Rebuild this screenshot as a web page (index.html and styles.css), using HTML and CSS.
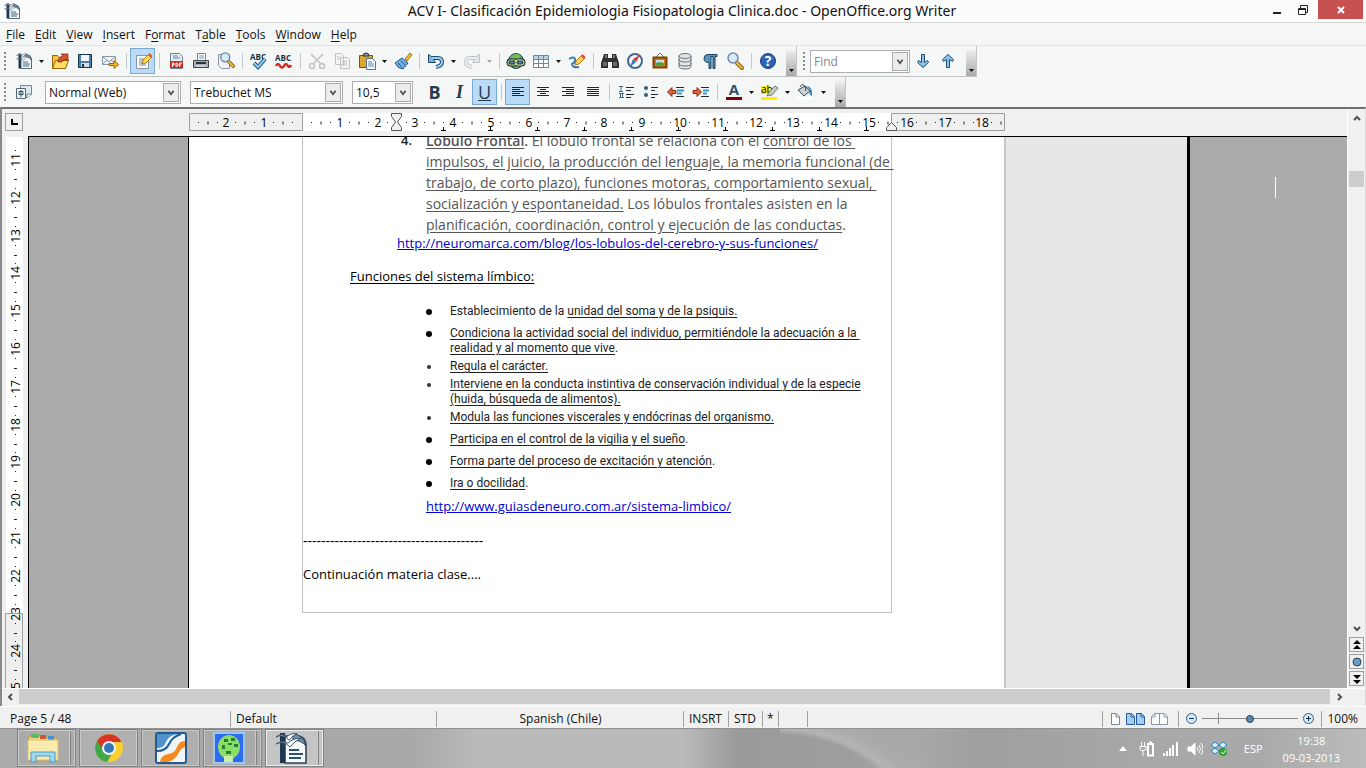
FILE: index.html
```html
<!DOCTYPE html>
<html lang="es">
  <head>
    <title>ACV I- Clasificación Epidemiologia Fisiopatologia Clinica.doc - OpenOffice.org Writer</title>
    <meta charset="UTF-8">
    <link rel="stylesheet" href="styles.css">
  </head>
  <body>
    <svg class="defs" width="0" height="0">
        <symbol id="writer" viewBox="0 0 16 16">
            <path d="M5 2h6q4 0 4.500 4v9.500H5z" fill="#f4f8fb" stroke="#2d4658" stroke-width=".8"/>
            <path d="M9 1q5 0 6.500 6Q13 4 9 4z" fill="#6f8ea3" stroke="#2d4658" stroke-width=".5"/>
            <path d="M2.500.5H5v15H2.500z" fill="#1d3850"/>
            <path d="M.5 2.500q3-1.500 5 .3Q7.500.5 11 .8 8.500 2 7 4.200 4-.5.5 2.500z" fill="#fff" stroke="#40596b" stroke-width=".5"/>
            <path d="M.5 6q3-2 6-.4Q9 3 13 3.200 9.500 4.500 7.500 7.500 4.500 4 .5 6z" fill="#fff" stroke="#40596b" stroke-width=".5"/>
            <path d="M7 9h5M7 11h7M7 13h6" stroke="#2f526c" stroke-width=".9"/>
        </symbol>
        <symbol id="down" viewBox="0 0 5 3"><path d="M0 0h5L2.500 3z" fill="currentColor"/></symbol>
        <symbol id="chevron" viewBox="0 0 8 8"><path d="M1 2l3 4 3-4" fill="none" stroke="#505050" stroke-width="2"/></symbol>
        <symbol id="lens" viewBox="0 0 20 20">
            <path d="M12 12l5 5" stroke="#8b6310" stroke-width="4" stroke-linecap="round"/>
            <path d="M12 12l5 5" stroke="#f0bf3c" stroke-width="2" stroke-linecap="round"/>
            <circle cx="8" cy="7" r="5" fill="#d5eafa" stroke="#7189a0" stroke-width="1.500"/>
        </symbol>
    </svg>

    <header class="titlebar">
        <svg class="app-icon" width="16" height="16"><use href="#writer"/></svg>
        <h1>ACV I- Clasificación Epidemiologia Fisiopatologia Clinica.doc - OpenOffice.org Writer</h1>
        <div class="window-buttons">
            <button aria-label="Minimize"><svg width="8" height="10"><path d="M0 7h8v2H0z" fill="#222"/></svg></button>
            <button aria-label="Restore"><svg width="10" height="10" fill="none" stroke="#222"><path d="M.5 3.500h7v6h-7zM.5 4.500h7M2.500 3V.5h7v7H8"/></svg></button>
            <button class="close" aria-label="Close"><svg width="8" height="8"><path d="M1 1l6 6M7 1L1 7" stroke="#fff" stroke-width="2"/></svg></button>
        </div>
    </header>

    <nav class="menubar">
        <button><u>F</u>ile</button>
        <button><u>E</u>dit</button>
        <button><u>V</u>iew</button>
        <button><u>I</u>nsert</button>
        <button>F<u>o</u>rmat</button>
        <button>T<u>a</u>ble</button>
        <button><u>T</u>ools</button>
        <button><u>W</u>indow</button>
        <button><u>H</u>elp</button>
    </nav>

    <div class="toolbar-row">
        <div class="toolbar">
            <span class="grip"></span>
            <button class="tool" aria-label="New"><svg width="16" height="16"><use href="#writer"/></svg></button>
            <button class="drop" aria-label="New options"><svg width="5" height="3"><use href="#down"/></svg></button>
            <button class="tool" aria-label="Open"><svg viewBox="0 0 20 20"><path d="M2.500 17.500v-13h5l2 2h6v11z" fill="#f7c33c" stroke="#9b6408"/><path d="M2.500 17.500l3-8h13l-3 8z" fill="#ffdc62" stroke="#9b6408"/><path d="M8 11q0-5 5-6l-2-2h7v7l-2-2q-4 1-4 3z" fill="#d8502c" stroke="#7a2210" stroke-width=".7"/></svg></button>
            <button class="tool" aria-label="Save"><svg viewBox="0 0 20 20"><path d="M3.500 3.500h13v13h-13z" fill="#4c80a8" stroke="#17344d"/><path d="M6 4h8v6H6z" fill="#f2f6fa"/><path d="M6 12h8v4H6z" fill="#d3dde6"/><path d="M7 13h2v3H7z" fill="#17344d"/></svg></button>
            <button class="tool" aria-label="E-mail"><svg viewBox="0 0 20 20"><path d="M2.500 5.500h13v8h-13z" fill="#eef3f7" stroke="#8797a5"/><path d="M3 6l6 5 6-5M3 13l4-4M15 13l-4-4" fill="none" stroke="#8797a5"/><path d="M9 12.500h5v-3l4.500 4-4.500 4v-3H9z" fill="#f5b731" stroke="#9b6408"/></svg></button>
            <span class="sep"></span>
            <button class="tool pressed" aria-label="Edit File"><svg viewBox="0 0 20 20"><path d="M3.500 4.500h12v13h-12z" fill="#f6f9fb" stroke="#8797a5"/><path d="M6 8h6M6 10h4M6 12h4M6 14h7" stroke="#7b8d9c"/><path d="M9 13l1-4 6-6 3 3-6 6z" fill="#ffd84a" stroke="#9b6408" stroke-width=".8"/><path d="M15 4l3 3 1.500-2-3-3z" fill="#e0553a"/></svg></button>
            <span class="sep"></span>
            <button class="tool" aria-label="Export as PDF"><svg viewBox="0 0 20 20"><path d="M4.500 2.500h9l3 3v12h-12z" fill="#e4edf4" stroke="#6d8294"/><path d="M7 5h5M7 7h7" stroke="#6d8294"/><path d="M4 10h13v7H4z" fill="#d12c20"/><path d="M6.500 16v-4h1.500v2H6.500M10 12v3.500q2 0 2-1.700T10 12M13.500 16v-4H16M13.500 14H15" fill="none" stroke="#fff"/></svg></button>
            <button class="tool" aria-label="Print"><svg viewBox="0 0 20 20"><path d="M6.500 9V2.500h8V9" fill="#fff" stroke="#6d8294"/><path d="M8 5h5M8 7h5" stroke="#5b9bd0"/><path d="M2.500 9.500h15v7h-15z" fill="#a8b0b6" stroke="#3e474e"/><path d="M5 12h10" stroke="#2c3439" stroke-width="2"/><path d="M5 15h10" stroke="#eee"/></svg></button>
            <button class="tool" aria-label="Page Preview"><svg viewBox="0 0 20 20"><path d="M2.500 3.500h11v14h-8l-3-3z" fill="#f0f5f9" stroke="#8797a5"/><use href="#lens" x="2" y="0" width="18" height="18"/></svg></button>
            <span class="sep"></span>
            <button class="tool" aria-label="Spelling and Grammar"><svg viewBox="0 0 20 20"><text x="1" y="9" class="abc">ABC</text><path d="M5 12l4 4 7-8" fill="none" stroke="#1d5580" stroke-width="4"/><path d="M5 12l4 4 7-8" fill="none" stroke="#8dcaf0" stroke-width="2"/></svg></button>
            <button class="tool" aria-label="AutoSpellcheck"><svg viewBox="0 0 20 20"><text x="1" y="10" class="abc">ABC</text><path d="M2 15q2-4 4 0 2 3 4 0 2-4 4 0 2 2 3-1" fill="none" stroke="#d52b1e" stroke-width="2.500"/></svg></button>
            <span class="sep"></span>
            <button class="tool" aria-label="Cut"><svg viewBox="0 0 20 20" fill="none" stroke="#bfc3c6" stroke-width="1.500"><path d="M4 3l10 10M16 3L6 13"/><circle cx="5" cy="15" r="2.500"/><circle cx="15" cy="15" r="2.500"/></svg></button>
            <button class="tool" aria-label="Copy"><svg viewBox="0 0 20 20" fill="#f3f4f4" stroke="#bfc3c6"><path d="M3.500 2.500h6l2 2v9h-8zM8.500 6.500h7l2 2v9h-9z"/><path d="M5 6h3M5 8h3M10 10h5M10 12h5M10 14h5"/></svg></button>
            <button class="tool" aria-label="Paste"><svg viewBox="0 0 20 20"><path d="M2.500 4.500h13v12h-13z" fill="#dba52f" stroke="#7d5507"/><path d="M6 5q0-3 3-3t3 3z" fill="#8c959c" stroke="#333"/><path d="M9.500 7.500h6l3 3v8h-9z" fill="#f3f7fa" stroke="#5a7083"/><path d="M11 11h4M11 13h6M11 15h6" stroke="#5b8bb5"/></svg></button>
            <button class="drop" aria-label="Paste options"><svg width="5" height="3"><use href="#down"/></svg></button>
            <button class="tool" aria-label="Format Paintbrush"><svg viewBox="0 0 20 20"><path d="M12 8l5-6 2 2-5 6z" fill="#f0b52e" stroke="#8b6310" stroke-width=".8"/><path d="M2 12l7-5 6 5-5 6q-5 0-8-6z" fill="#6eaee0" stroke="#1c5a90"/><path d="M5 12l4 4M8 10l4 4" stroke="#1c5a90"/></svg></button>
            <span class="sep"></span>
            <button class="tool" aria-label="Undo"><svg viewBox="0 0 20 20"><path d="M5 7h7q4 0 4 4t-6 5" fill="none" stroke="#1d4c70" stroke-width="4"/><path d="M2.500 3.500v8h7l-2-3V6l-2-.5z" fill="#7db4dc" stroke="#1d4c70"/><path d="M6 7h6q4 0 4 4t-6 5" fill="none" stroke="#9bcbed" stroke-width="2"/></svg></button>
            <button class="drop" aria-label="Undo list"><svg width="5" height="3"><use href="#down"/></svg></button>
            <button class="tool" aria-label="Redo" disabled><svg viewBox="0 0 20 20"><path d="M15 7H8q-4 0-4 4t6 5" fill="none" stroke="#c0c4c7" stroke-width="4"/><path d="M17.500 3.500v8h-7l2-3V6l2-.5z" fill="#e2e5e7" stroke="#c0c4c7"/><path d="M14 7H8q-4 0-4 4t6 5" fill="none" stroke="#eceeef" stroke-width="2"/></svg></button>
            <button class="drop" aria-label="Redo list" disabled><svg width="5" height="3"><use href="#down"/></svg></button>
            <span class="sep"></span>
            <button class="tool" aria-label="Hyperlink"><svg viewBox="0 0 20 20"><circle cx="10" cy="10" r="7.500" fill="#4c8bbd" stroke="#26475f"/><path d="M4 6q4-4 9-3l2 3-4 2-6-1zM6 15l5-1 3 1-3 2z" fill="#75bd4b"/><rect x="2" y="9" width="9" height="5" rx="2.500" fill="none" stroke="#233524" stroke-width="3"/><rect x="9" y="9" width="9" height="5" rx="2.500" fill="none" stroke="#233524" stroke-width="3"/><rect x="2" y="9" width="9" height="5" rx="2.500" fill="none" stroke="#c9e67a"/><rect x="9" y="9" width="9" height="5" rx="2.500" fill="none" stroke="#f3f6d8"/></svg></button>
            <button class="tool" aria-label="Table"><svg viewBox="0 0 20 20"><path d="M2.500 4.500h15v12h-15z" fill="#fff" stroke="#71879a"/><path d="M3 5h14v3H3z" fill="#b8d2e8"/><path d="M2 8.500h16M2 12.500h16M7.500 5v12M12.500 5v12" stroke="#71879a"/></svg></button>
            <button class="drop" aria-label="Table size"><svg width="5" height="3"><use href="#down"/></svg></button>
            <button class="tool" aria-label="Show Draw Functions"><svg viewBox="0 0 20 20"><path d="M2 8q5-3 6 0t-3 5q0 4 7 3" fill="none" stroke="#3a78b8" stroke-width="2"/><path d="M8 14l1-4 6-6 3 3-6 6z" fill="#ffd04a" stroke="#9b6408" stroke-width=".8"/><path d="M14 5l3 3 1.500-2-3-3z" fill="#d84a38"/></svg></button>
            <span class="sep"></span>
            <button class="tool" aria-label="Find and Replace"><svg viewBox="0 0 20 20"><path d="M4 3h4v4h4V3h4l3 9v5h-7v-6H8v6H1v-5z" fill="#2f3032"/><path d="M3 11h4v4H3zM13 11h4v4h-4z" fill="#666b70"/><path d="M5 4h2v3H5zM13 4h2v3h-2z" fill="#777"/></svg></button>
            <button class="tool" aria-label="Navigator"><svg viewBox="0 0 20 20"><circle cx="10" cy="10" r="7" fill="#f5f9fc" stroke="#46698a" stroke-width="2"/><path d="M15 4l-7 4 3 3z" fill="#df3524"/><path d="M5 16l3-8 3 3z" fill="#2e78c4"/></svg></button>
            <button class="tool" aria-label="Gallery"><svg viewBox="0 0 20 20"><path d="M6 6l4-4 4 4" fill="none" stroke="#777"/><path d="M3.500 6.500h13v10h-13z" fill="#c87c20" stroke="#7c430b" stroke-width="2"/><path d="M6 9h8v5H6z" fill="#bfe0f8"/><path d="M6 14v-2l3-1 5 1v2z" fill="#4e9b38"/><circle cx="12" cy="10" r="1" fill="#ffdd3c"/></svg></button>
            <button class="tool" aria-label="Data Sources"><svg viewBox="0 0 20 20" fill="#e0e5e8" stroke="#697278"><path d="M4 5v10q0 3 6 3t6-3V5"/><ellipse cx="10" cy="5" rx="6" ry="2.500"/><path d="M4 8q0 3 6 3t6-3M4 12q0 3 6 3t6-3" fill="none"/></svg></button>
            <button class="tool" aria-label="Nonprinting Characters"><svg viewBox="0 0 20 20"><path d="M17 3.500H8q-4 0-4 4t5 4v6h2v-12h2v12h2v-12h2z" fill="#5b93bb" stroke="#17405f"/></svg></button>
            <button class="tool" aria-label="Zoom"><svg viewBox="0 0 20 20"><use href="#lens" width="20" height="20"/></svg></button>
            <span class="sep"></span>
            <button class="tool" aria-label="Help"><svg viewBox="0 0 20 20"><circle cx="10" cy="10" r="7.500" fill="#2d62b4" stroke="#173b78"/><text x="10" y="15" class="help-mark">?</text></svg></button>
            <button class="more" aria-label="Toolbar options"><svg width="5" height="3"><use href="#down"/></svg></button>
        </div>
        <div class="toolbar find-bar">
            <span class="grip"></span>
            <div class="combo find">
                <input type="text" placeholder="Find" aria-label="Find">
                <svg class="combo-arrow" viewBox="0 0 16 18"><use href="#chevron" x="4" y="5" width="8" height="8"/></svg>
            </div>
            <button class="tool" aria-label="Find Next"><svg viewBox="0 0 20 20"><path d="M8.500 3.500h3v8l3-2 1 2-5.500 5-5.500-5 1-2 3 2z" fill="#8cc3ea" stroke="#1d4c70"/></svg></button>
            <button class="tool" aria-label="Find Previous"><svg viewBox="0 0 20 20"><path d="M8.500 16.500h3v-8l3 2 1-2-5.500-5-5.500 5 1 2 3-2z" fill="#8cc3ea" stroke="#1d4c70"/></svg></button>
            <button class="more" aria-label="Find toolbar options"><svg width="5" height="3"><use href="#down"/></svg></button>
        </div>
    </div>

    <div class="toolbar-row format-row">
        <div class="toolbar">
            <span class="grip"></span>
            <button class="tool" aria-label="Styles and Formatting"><svg viewBox="0 0 20 20"><path d="M6.500 3.500h11v9l-4 3h-7z" fill="#dfe8ef" stroke="#71879a"/><path d="M17 12h-4v4" fill="#fff" stroke="#71879a"/><path d="M2.500 6.500h9v10h-9z" fill="#f2f6f9" stroke="#52697d"/><path d="M5 9.500h4v3H5zM7 8v7" fill="none" stroke="#334c61"/></svg></button>
            <div class="combo style">
                <select aria-label="Apply Style"><option>Normal (Web)</option></select>
                <svg class="combo-arrow" viewBox="0 0 16 18"><use href="#chevron" x="4" y="5" width="8" height="8"/></svg>
            </div>
            <div class="combo font">
                <select aria-label="Font Name"><option>Trebuchet MS</option></select>
                <svg class="combo-arrow" viewBox="0 0 16 18"><use href="#chevron" x="4" y="5" width="8" height="8"/></svg>
            </div>
            <div class="combo size">
                <select aria-label="Font Size"><option>10,5</option></select>
                <svg class="combo-arrow" viewBox="0 0 16 18"><use href="#chevron" x="4" y="5" width="8" height="8"/></svg>
            </div>
            <button class="tool letter bold">B</button>
            <button class="tool letter italic">I</button>
            <button class="tool letter underline pressed">U</button>
            <span class="sep"></span>
            <button class="tool pressed" aria-label="Align Left"><svg viewBox="0 0 20 20" stroke="#1f2933"><path d="M4 5.500h12M4 7.500h8M4 9.500h12M4 11.500h8M4 13.500h12"/></svg></button>
            <button class="tool" aria-label="Centered"><svg viewBox="0 0 20 20" stroke="#1f2933"><path d="M4 5.500h12M7 7.500h6M4 9.500h12M7 11.500h6M4 13.500h12"/></svg></button>
            <button class="tool" aria-label="Align Right"><svg viewBox="0 0 20 20" stroke="#1f2933"><path d="M4 5.500h12M8 7.500h8M4 9.500h12M8 11.500h8M4 13.500h12"/></svg></button>
            <button class="tool" aria-label="Justified"><svg viewBox="0 0 20 20" stroke="#1f2933"><path d="M4 5.500h12M4 7.500h12M4 9.500h12M4 11.500h12M4 13.500h12"/></svg></button>
            <span class="sep"></span>
            <button class="tool" aria-label="Numbering On/Off"><svg viewBox="0 0 20 20"><path d="M10 5.500h8M10 8.500h5M10 12.500h8M10 15.500h5" stroke="#1f2933"/><path d="M3 4.500h4M5 4v5M3 9.500h4M3 11.500h5M4.500 11v5M6.500 11v5M3 15.500h5" stroke="#3f6b8c"/></svg></button>
            <button class="tool" aria-label="Bullets On/Off"><svg viewBox="0 0 20 20"><path d="M10 5.500h7M10 8.500h4M10 12.500h7M10 15.500h4" stroke="#1f2933"/><circle cx="5" cy="6" r="2" fill="#31607f"/><circle cx="5" cy="13" r="2" fill="#31607f"/></svg></button>
            <button class="tool" aria-label="Decrease Indent"><svg viewBox="0 0 20 20"><path d="M10 5.500h8M10 14.500h8" stroke="#1f2933"/><path d="M11 8.500h7M11 11.500h5" stroke="#3c9ad0" stroke-width="2"/><path d="M10 8.500H6v-3L1.500 10 6 14.500v-3h4z" fill="#e0663c" stroke="#8c2813"/></svg></button>
            <button class="tool" aria-label="Increase Indent"><svg viewBox="0 0 20 20"><path d="M10 5.500h8M10 14.500h8" stroke="#1f2933"/><path d="M12 8.500h6M12 11.500h4" stroke="#3c9ad0" stroke-width="2"/><path d="M2 8.500h4v-3l4.500 4.500L6 14.500v-3H2z" fill="#e0663c" stroke="#8c2813"/></svg></button>
            <span class="sep"></span>
            <button class="tool" aria-label="Font Color"><svg viewBox="0 0 20 20"><text x="10" y="13" class="color-letter">A</text><path d="M2 15h16v3H2z" fill="#800000"/></svg></button>
            <button class="drop" aria-label="Font colors"><svg width="5" height="3"><use href="#down"/></svg></button>
            <button class="tool" aria-label="Highlighting"><svg viewBox="0 0 20 20"><path d="M1 4h9v8H1zM1 15h16v3H1z" fill="#ffee00"/><text x="1" y="11" class="ab">ab</text><path d="M7 14l2-4 6-6 3 2-6 7z" fill="#c3c9c4" stroke="#596153" stroke-width=".8"/></svg></button>
            <button class="drop" aria-label="Highlight colors"><svg width="5" height="3"><use href="#down"/></svg></button>
            <button class="tool" aria-label="Background Color"><svg viewBox="0 0 20 20"><path d="M1 15h16v3H1z" fill="#fff"/><path d="M2 8l7-4 5 5-6 5z" fill="#c8d1d7" stroke="#3f4a52"/><path d="M4 5q2-4 5-1l1 5" fill="none" stroke="#3f4a52"/><path d="M10 4q7 0 6 10-4-2-2-6z" fill="#3f86bd"/></svg></button>
            <button class="drop" aria-label="Background colors"><svg width="5" height="3"><use href="#down"/></svg></button>
            <button class="more" aria-label="Formatting options"><svg width="5" height="3"><use href="#down"/></svg></button>
        </div>
    </div>

    <main class="editor">
        <div class="ruler-bar">
            <button class="tab-type" aria-label="Tab type"><svg width="7" height="6"><path d="M1 0v5h6" fill="none" stroke="#000" stroke-width="2"/></svg></button>
            <svg class="ruler-h" width="824" height="20">
                <path d="M114 0h588v18H114z" fill="#fff"/>
                <path d="M.5.5h113v17H.5zM702.500.5h113v17h-113z" fill="#efefef" stroke="#9f9f9f"/>
            </svg>
        </div>
        <svg class="ruler-v" width="26">
            <path d="M4 1h17v476H4z" fill="#fff"/>
            <path d="M3.500 477.500h17v900h-17z" fill="#efefef" stroke="#9f9f9f"/>
        </svg>
        <div class="workspace">
            <article class="page">
                <div class="text-area">
                    <div class="numbered">
                        <span class="number">4.</span>
                        <p><u><b>Lóbulo Frontal</b></u><b>.</b> El lóbulo frontal se relaciona con el <u>control de los </u><br><u>impulsos, el juicio, la producción del lenguaje, la memoria funcional (de </u><br><u>trabajo, de corto plazo), funciones motoras, comportamiento sexual, </u><br><u>socialización y espontaneidad.</u> Los lóbulos frontales asisten en la<br><u>planificación, coordinación, control y ejecución de las conductas</u>.</p>
                    </div>
                    <p class="source"><a href="#">http://neuromarca.com/blog/los-lobulos-del-cerebro-y-sus-funciones/</a></p>
                    <h2>Funciones del sistema límbico:</h2>
                    <ul>
                        <li><p>Establecimiento de la <u>unidad del soma y de la psiquis.</u></p></li>
                        <li><p><u>Condiciona la actividad social del individuo, permitiéndole la adecuación a la </u><br><u>realidad y al momento que vive</u>.</p></li>
                        <li class="tight"><p><u>Regula el carácter.</u></p></li>
                        <li class="tight"><p><u>Interviene en la conducta instintiva de conservación individual y de la especie</u><br><u>(huida, búsqueda de alimentos).</u></p></li>
                        <li class="tight"><p><u>Modula las funciones viscerales y endócrinas del organismo.</u></p></li>
                        <li><p><u>Participa en el control de la vigilia y el sueño</u>.</p></li>
                        <li><p><u>Forma parte del proceso de excitación y atención</u>.</p></li>
                        <li><p><u>Ira o docilidad</u>.</p></li>
                    </ul>
                    <p class="source inner"><a href="#">http://www.guiasdeneuro.com.ar/sistema-limbico/</a></p>
                    <p class="plain dashes">----------------------------------------</p>
                    <p class="plain">Continuación materia clase....</p>
                </div>
            </article>
            <aside class="notes"></aside>
            <span class="caret"></span>
        </div>
        <div class="scroll-v">
            <button aria-label="Scroll up"><svg width="8" height="8"><path d="M1 6l3-3 3 3" fill="none" stroke="#505050" stroke-width="2"/></svg></button>
            <div class="track"><span class="thumb"></span></div>
            <button aria-label="Scroll down"><svg width="8" height="8"><path d="M1 2l3 3 3-3" fill="none" stroke="#505050" stroke-width="2"/></svg></button>
            <button class="jump" aria-label="Previous Page"><svg width="8" height="10"><path d="M4 0l4 4H0zM4 5l4 4H0z"/></svg></button>
            <button class="jump" aria-label="Navigation"><svg width="10" height="10"><circle cx="5" cy="5" r="4" fill="#6a9cc4" stroke="#27465f"/></svg></button>
            <button class="jump" aria-label="Next Page"><svg width="8" height="10"><path d="M0 1h8L4 5zM0 6h8l-4 4z"/></svg></button>
        </div>
        <div class="scroll-h">
            <button aria-label="Scroll left"><svg width="8" height="8"><path d="M5 1L2 4l3 3" fill="none" stroke="#505050" stroke-width="2"/></svg></button>
            <span class="thumb"></span>
            <button aria-label="Scroll right"><svg width="8" height="8"><path d="M3 1l3 3-3 3" fill="none" stroke="#505050" stroke-width="2"/></svg></button>
        </div>
    </main>

    <footer class="statusbar">
        <span class="page-no">Page 5 / 48</span>
        <span class="page-style">Default</span>
        <span class="language">Spanish (Chile)</span>
        <span class="insert-mode">INSRT</span>
        <span class="select-mode">STD</span>
        <span class="modified">*</span>
        <span class="signature"></span>
        <span class="info"></span>
        <span class="views">
            <button aria-label="Single page"><svg width="9" height="12"><path d="M.5.5h5l3 3v8h-8z" fill="#fff" stroke="#71879a"/><path d="M5 1v3h3" fill="none" stroke="#71879a"/></svg></button>
            <button aria-label="Several pages"><svg width="19" height="12"><path d="M.5.500h5l3 3v8h-8zM10.500.5h5l3 3v8h-8z" fill="#a9cdf0" stroke="#245a9c"/><path d="M5 1v3h3M15 1v3h3" fill="none" stroke="#245a9c"/></svg></button>
            <button aria-label="Book mode"><svg width="17" height="12"><path d="M.5 3.500l3-3h5v11h-8zM8.500.5h5l3 3v8h-8z" fill="#fff" stroke="#8797a5"/><path d="M4 1v3H1M13 1v3h3" fill="none" stroke="#8797a5"/></svg></button>
        </span>
        <span class="zoom">
            <button aria-label="Zoom out"><svg width="11" height="11"><circle cx="5.500" cy="5.500" r="5" fill="#d4e9f8" stroke="#31607f"/><path d="M3 5.500h5" stroke="#17344d"/></svg></button>
            <input type="range" min="0" max="100" value="49" aria-label="Zoom">
            <button aria-label="Zoom in"><svg width="11" height="11"><circle cx="5.500" cy="5.500" r="5" fill="#d4e9f8" stroke="#31607f"/><path d="M3 5.500h5M5.500 3v5" stroke="#17344d"/></svg></button>
        </span>
        <span class="percent">100%</span>
    </footer>

    <div class="taskbar">
        <div class="apps">
            <button class="stack" aria-label="File Explorer"><svg width="34" height="34" viewBox="0 0 34 34"><path d="M3 5h11l2 2h15v22H3z" fill="#f4dc84" stroke="#b99a42"/><path d="M5 3h8v4H5z" fill="#5fb86a"/><path d="M14 4h6v4h-6z" fill="#d4552f"/><path d="M22 5h6v4h-6z" fill="#3f8fd0"/><path d="M2 9h30v20H2z" fill="#f9ebae" stroke="#d9c06c"/><path d="M5 31V21h24v10h-5v-6H10v6z" fill="#9fd8f0" stroke="#4b9cc4"/></svg></button>
            <button aria-label="Chrome"><svg width="32" height="32" viewBox="0 0 32 32"><circle cx="16" cy="16" r="14" fill="#f7cf2e"/><path d="M4 9a14 14 0 0 0 10 21l7-12-11-6z" fill="#42a648"/><path d="M4 9A14 14 0 0 1 28.500 10H16l-6 7z" fill="#d8352a"/><circle cx="16" cy="16" r="7" fill="#f3f3f3"/><circle cx="16" cy="16" r="5" fill="#3476bd"/></svg></button>
            <button aria-label="Foxit Reader"><svg width="32" height="32" viewBox="0 0 32 32"><rect x="1" y="1" width="30" height="30" rx="2" fill="#f2f5f8" stroke="#215b91" stroke-width="2"/><path d="M2 16q7 0 9-6t11-8H2z" fill="#4f94cc"/><path d="M2 19q9 0 12-7T26 2" fill="none" stroke="#1d5f9e" stroke-width="2"/><path d="M5 30q1-7 8-8t9-7 8-6v6q-4 1-7 7t-10 8z" fill="#f58a1c"/></svg></button>
            <button class="stack" aria-label="Image viewer"><svg width="32" height="32" viewBox="0 0 32 32"><path d="M1 1h30v30H1z" fill="#2f6bf0" stroke="#9cc8f2" stroke-width="2"/><ellipse cx="16" cy="15" rx="11" ry="12" fill="#8ddc6a"/><path d="M11 24h9v6h-9z" fill="#c6f0a8"/><path d="M11 7h4v3h-4zM18 6h4v3h-4zM9 13h3v4H9zM21 12h4v3h-4zM13 19h5v3h-5zM15 11h4v2h-4z" fill="#247f2c"/></svg></button>
            <button class="stack active" aria-label="OpenOffice Writer"><svg width="32" height="32"><use href="#writer"/></svg></button>
        </div>
        <div class="tray">
            <svg class="show-hidden" width="8" height="5"><path d="M4 0l4 5H0z" fill="#fff"/></svg>
            <svg width="16" height="16" fill="none" stroke="#fff"><path d="M9 3h5v11.500H9zM10 1.500h3" stroke-width="2"/><path d="M2.500 1v4M5.500 1v4M1 5.500h6v3l-2 1H3l-2-1zM4 10v5"/></svg>
            <svg width="16" height="14" fill="#fff"><path d="M0 11h2v3H0zM3 9h2v5H3zM6 6h2v8H6zM9 3h2v11H9zM13 0h2v14h-2z"/></svg>
            <svg width="16" height="14" fill="none" stroke="#fff"><path d="M1 5h3l4-4v12L4 9H1z" fill="#fff"/><path d="M10 5q2 2 0 4M12 3q3 4 0 8M14 1q4 6 0 12"/></svg>
            <svg width="17" height="16"><path d="M4 1l4 3-4 3-4-3zM12 1l4 3-4 3-4-3zM4 7l4 3-4 3-4-3zM12 7l4 3-4 3-4-3z" fill="#d7eefb" stroke="#2c87c8"/><circle cx="12" cy="11" r="4" fill="#34a035"/><path d="M10 11l2 2 3-4" fill="none" stroke="#fff"/></svg>
            <span class="lang">ESP</span>
            <time>19:38<br>09-03-2013</time>
        </div>
    </div>
    <script src="rulers.js"></script>
  </body>
</html>
```
FILE: styles.css
```css
*{
    margin: 0;
    padding: 0;
    box-sizing: border-box;
}
html,body{width: 100%;height: 100%;}
body{
    display: flex;
    flex-direction: column;
    overflow: hidden;
    background: #f5f7f7;
    color: #111;
    font-family: "Open Sans", "Liberation Sans", sans-serif;
    font-size: 12px;
}
button{
    border: none;
    background: none;
    color: inherit;
    font: inherit;
    display: flex;
    align-items: center;
    justify-content: center;
}
svg{
    display: block;
    flex-shrink: 0;
}
.defs{position: absolute;}

/* title and menu */
.titlebar{
    height: 23px;
    flex-shrink: 0;
    display: flex;
    align-items: center;
    padding: 0 3px 0 4px;
    background: #fcfcfc;
    border-bottom: 1px solid #d5d7d7;
}
h1{
    flex: 1;
    padding-left: 80px;
    text-align: center;
    font-family: "Noto Sans", sans-serif;
    font-size: 14px;
    font-weight: normal;
    line-height: 22px;
    white-space: nowrap;
}
.window-buttons{
    display: flex;
    align-self: flex-start;
}
.window-buttons button{
    width: 26px;
    height: 19px;
}
.window-buttons .close{
    width: 45px;
    margin-left: 2px;
    background: #c75050;
}
.menubar{
    height: 23px;
    flex-shrink: 0;
    display: flex;
    gap: 10px;
    padding-left: 6px;
    border-bottom: 1px solid #e3e5e5;
}
u{text-underline-offset: 2px;}

/* toolbars */
.toolbar-row{
    height: 31px;
    flex-shrink: 0;
    display: flex;
}
.format-row{height: 30px;}
.toolbar{
    display: flex;
    align-items: center;
    padding-left: 4px;
    border-right: 1px solid #c3c5c5;
    border-bottom: 1px solid #c3c5c5;
}
.format-row .toolbar{border-bottom: none;}
.grip{
    width: 2px;
    height: 18px;
    margin-right: 5px;
    background: repeating-linear-gradient(#8a8c8c 0 2px, transparent 2px 4px);
}
.tool{
    width: 25px;
    height: 26px;
    border: 1px solid transparent;
}
.tool svg{width: 20px;height: 20px;overflow: visible;}
.tool svg[width="16"]{width: 16px;height: 16px;}
.pressed{
    background: #b9dbf8;
    border-color: #7aa9d4;
}
.drop{
    width: 11px;
    height: 26px;
}
.drop:disabled{color: #a5a8aa;}
.sep{
    width: 8px;
    height: 16px;
    background: linear-gradient(#c6c9c9, #c6c9c9) center / 1px 100% no-repeat;
}
.more{
    width: 10px;
    height: 26px;
    margin-left: 6px;
    align-self: flex-end;
    align-items: flex-end;
    padding-bottom: 4px;
    background: linear-gradient(#eee, #a8a8a8);
}
.find-bar{padding-left: 6px;}
.abc{font: bold 8px "Open Sans", sans-serif;fill: #1c3348;}
.help-mark{font: bold 14px "Open Sans", sans-serif;fill: #fff;text-anchor: middle;}
.color-letter{font: bold 15px "Open Sans", sans-serif;fill: #31526d;text-anchor: middle;}
.ab{font: 10px "Open Sans", sans-serif;}
.combo{
    display: flex;
    align-items: center;
    height: 23px;
    padding: 0 1px 0 3px;
    margin-right: 9px;
    background: #fff;
    border: 1px solid #abadb3;
}
.combo select,.combo input{
    appearance: none;
    flex: 1;
    min-width: 0;
    border: none;
    outline: none;
    background: none;
    color: #111;
    font: inherit;
}
.combo input::placeholder{color: #888;}
.combo-arrow{
    width: 16px;
    height: 19px;
    border: 1px solid #acacac;
    background: #ececec;
}
.find{width: 100px;margin-right: 0;}
.style{width: 136px;margin-left: 9px;}
.font{width: 153px;}
.size{width: 61px;}
.letter{
    font-size: 18px;
    line-height: 24px;
    color: #263b4d;
}
.bold{font-weight: bold;}
.italic{font-family: "Liberation Serif", serif;font-style: italic;font-weight: bold;}
.underline{text-decoration: underline;}

/* editor */
.editor{
    flex: 1;
    min-height: 0;
    display: grid;
    grid-template-columns: 26px 1fr 18px;
    grid-template-rows: 27px 1fr 18px;
    border: 2px solid #8a8a8a;
    border-top-color: #707070;
    border-bottom: none;
    border-right: 1px solid #ddd;
    background: #f0f0f0;
}
.ruler-bar{
    grid-column: 1 / 3;
    display: flex;
    padding: 4px 0 0 3px;
}
.tab-type{
    width: 18px;
    height: 18px;
    border: 1px solid #9f9f9f;
}
.ruler-h{
    margin-left: 166px;
    overflow: visible;
}
.ruler-h text,.ruler-v text{
    font-size: 12px;
    text-anchor: middle;
}
.ruler-v{
    grid-row: 2;
    height: 100%;
    overflow: hidden;
}
.workspace{
    position: relative;
    display: flex;
    overflow: hidden;
    padding-left: 159px;
    background: #ababab;
    border-top: 1px solid #000;
    border-left: 1px solid #000;
}
.page{
    width: 818px;
    flex-shrink: 0;
    padding: 0 112px 0 113px;
    background: #fff;
    border-left: 1px solid #000;
    border-right: 2px solid #c8c8c8;
}
.notes{
    width: 184px;
    background: #e6e6e6;
    border-right: 3px solid #000;
}
.caret{
    position: absolute;
    left: 1246px;
    top: 40px;
    width: 1px;
    height: 21px;
    background: #fff;
}
.text-area{
    display: flow-root;
    height: 476px;
    border: 1px solid #c0c0c0;
    border-top: none;
    color: #000;
}
.text-area p{white-space: pre;}
.numbered{
    display: flex;
    padding-left: 98px;
    margin-top: -7px;
    font-size: 14px;
    line-height: 21px;
    color: #555;
}
.numbered b{font-weight: 600;}
.number{
    width: 25px;
    flex-shrink: 0;
    color: #222;
    font-size: 13px;
    font-weight: 600;
}
.source,.plain,h2{
    font-size: 13px;
    font-weight: normal;
    line-height: 17px;
}
.source{padding-left: 94px;}
.source.inner{padding-left: 123px;margin-top: 7px;}
a{color: #0000d0;}
h2{
    padding-left: 47px;
    margin: 16px 0 19px;
    text-decoration: underline;
    text-underline-offset: 2px;
}
.plain{margin-top: 17px;}
.dashes{font-size: 14px;}
ul{
    padding-left: 123px;
    list-style: none;
}
li{
    display: flex;
    margin-top: 7px;
    font-family: Roboto, sans-serif;
    font-size: 12px;
    line-height: 15px;
    color: #222;
}
li::before{
    content: "";
    width: 6px;
    height: 6px;
    margin: 5px 18px 0 0;
    border-radius: 50%;
    background: #000;
}
.tight{margin-top: 3px;}
.tight::before{
    width: 4px;
    height: 4px;
    margin: 6px 19px 0 1px;
    background: #333;
}
.scroll-v{
    grid-column: 3;
    grid-row: 1 / 3;
    display: flex;
    flex-direction: column;
    width: 17px;
    padding-left: 1px;
    border-left: 1px solid #fff;
}
.scroll-v button{
    height: 17px;
}
.scroll-v .jump{
    width: 15px;
    height: 15px;
    margin-bottom: 2px;
    border: 1px solid #a0a0a0;
}
.track{
    flex: 1;
    padding-top: 45px;
}
.track .thumb{
    display: block;
    height: 16px;
    background: #cdcdcd;
}
.scroll-h{
    grid-column: 1 / 4;
    display: flex;
    height: 16px;
    padding-right: 18px;
    border-top: 1px solid #fff;
}
.scroll-h button{width: 17px;}
.scroll-h .thumb{
    flex: 1;
    background: #cdcdcd;
}

/* status bar */
.statusbar{
    height: 22px;
    flex-shrink: 0;
    display: flex;
    align-items: center;
    padding: 2px 4px 0 10px;
    background: #f0f0f0;
    border-top: 1px solid #fff;
}
.statusbar > span{
    height: 16px;
    line-height: 16px;
    padding-right: 4px;
}
.statusbar > span + span{
    padding-left: 5px;
    border-left: 1px solid #a0a0a0;
}
.page-no{width: 220px;}
.page-style{width: 206px;}
.language{width: 247px;text-align: center;}
.insert-mode{width: 45px;}
.select-mode{width: 34px;}
.statusbar .modified{width: 16px;padding: 0 4px;}
.signature{width: 29px;}
.info{flex: 1;}
.views,.zoom{
    display: flex;
    align-items: center;
}
.statusbar .views{
    width: 76px;
    gap: 6px;
    padding-left: 8px;
}
.statusbar .zoom{
    width: 143px;
    gap: 4px;
    padding: 0 7px;
}
.zoom input{
    appearance: none;
    flex: 1;
    min-width: 0;
    margin: 0 1px;
    height: 11px;
    background: linear-gradient(#8a8a8a, #8a8a8a) 16px 0 / 1px 100% no-repeat,
        linear-gradient(#8a8a8a, #8a8a8a) center / 100% 1px no-repeat;
}
.zoom input::-webkit-slider-thumb{
    appearance: none;
    width: 8px;
    height: 8px;
    border: 1px solid #27465f;
    border-radius: 50%;
    background: #5a87a8;
}

/* taskbar */
.taskbar{
    height: 40px;
    flex-shrink: 0;
    display: flex;
    justify-content: space-between;
    padding: 0 26px 0 17px;
    background: radial-gradient(circle at 0 160px, transparent 154px, #b4b4b4 160px, #acacac 170px, transparent 200px) 780px 0 / 220px 40px no-repeat,
        linear-gradient(90deg, #ababab 0, #a8a8a8 30%, #bababa 35%, #bababa 50%, #9a9a9a 54%, #9d9d9d 62%, #a8a8a8 67%, #9f9f9f 72%, #a9a9a9 85%, #a9a9a9 92%, #bbb 100%);
    border-top: 1px solid #919191;
}
.apps{
    display: flex;
    gap: 3px;
}
.apps button{
    width: 59px;
    height: 38px;
    border: 1px solid #828282;
    box-shadow: inset 0 0 0 1px #c9c9c9;
    background: rgba(255, 255, 255, .08);
}
.apps .stack{
    padding-right: 7px;
    background: linear-gradient(#828282, #828282) 52px 0 / 1px 100% no-repeat,
        linear-gradient(#c9c9c9, #c9c9c9) 51px 0 / 1px 100% no-repeat;
}
.apps .active{
    background-color: #c4c4c4;
    box-shadow: inset 0 0 0 1px #eee;
}
.tray{
    display: flex;
    align-items: center;
    gap: 8px;
    color: #fff;
}
.show-hidden{margin-right: 4px;}
.lang{margin: 0 12px 0 8px;font-size: 11px;}
time{
    text-align: center;
    font-size: 11px;
    line-height: 17px;
}
```
FILE: rulers.js
```js
const NS = "http://www.w3.org/2000/svg";
const CM = 37.8;

const add = (parent, name, attrs, text) => {
    const el = document.createElementNS(NS, name);
    for (const key in attrs) el.setAttribute(key, attrs[key]);
    if (text !== undefined) el.textContent = text;
    parent.appendChild(el);
};

// horizontal: zero sits on the left text margin
const top_ = document.querySelector(".ruler-h");
for (let n = -3; n <= 18; n++) {
    const x = Math.round(113 + n * CM);
    if (n !== 0 && n !== -3) add(top_, "text", { x: x, y: 14 }, Math.abs(n));
    add(top_, "path", { d: `M${x + 9} 9h1M${x + 19} 8v3${n < 18 ? `M${x + 28} 9h1` : ""}`, stroke: "#222", transform: "translate(0 .5)" });
}
for (let x = 254; x < 690; x += 47) {
    add(top_, "path", { d: `M${x - 2} 17.500h5M${x + .5} 14v3`, stroke: "#000" });
}
// indent markers
add(top_, "path", { d: "M202.500.5h10v3l-4 5.500 4 5.500v3h-10v-3l4-5.500-4-5.500z", fill: "#f0f0f0", stroke: "#555" });
add(top_, "path", { d: "M697.500 17.500v-3l5-5 5 5v3z", fill: "#f0f0f0", stroke: "#555" });

const side = document.querySelector(".ruler-v");
for (let n = 11; n <= 25; n++) {
    const y = Math.round(24 + (n - 11) * CM);
    add(side, "text", { x: 0, y: 0, transform: `translate(18 ${y}) rotate(-90)` }, n);
    add(side, "path", { d: `M13 ${y - 9.5}h1M13 ${y + 9.5}h1M12 ${y + 19.5}h3`, stroke: "#222" });
}
```
